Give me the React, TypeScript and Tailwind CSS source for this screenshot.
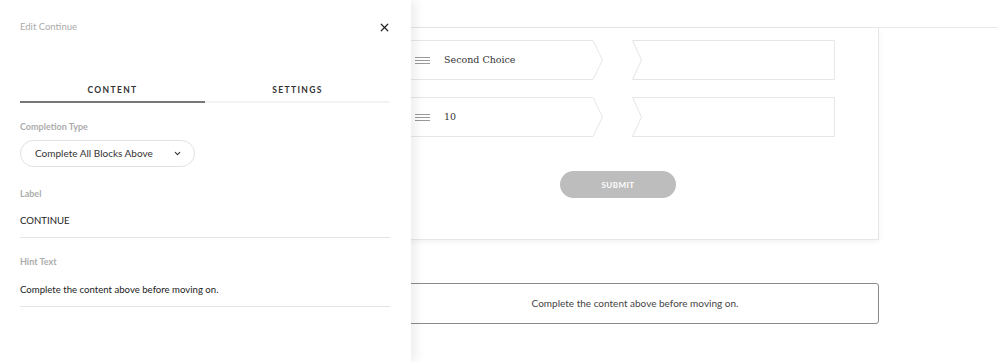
import { X, ChevronDown } from "lucide-react";

const sans = { fontFamily: "Lato, 'Noto Sans', sans-serif" };
const serif = { fontFamily: "'DejaVu Serif', 'Liberation Serif', serif" };

function DragHandle() {
    return (
        <div className="flex w-[15px] flex-col gap-[2px]">
            <span className="h-px w-full bg-[#9a9a9a]" />
            <span className="h-px w-full bg-[#9a9a9a]" />
            <span className="h-px w-full bg-[#9a9a9a]" />
        </div>
    );
}

function ChoiceRow({ label, h }: { label: string; h: number }) {
    return (
        <div className="flex items-center gap-[29px]">
            <div className="relative flex w-[201px] items-center pl-[13px]" style={{ height: h }}>
                <svg className="absolute inset-0" width="201" height={h} viewBox={`0 0 201 ${h}`}>
                    <polygon
                        points={`0.5,0.5 191,0.5 200.5,${h / 2} 191,${h - 0.5} 0.5,${h - 0.5}`}
                        fill="white"
                        stroke="#e6e6e6"
                    />
                </svg>
                <div className="relative flex items-center gap-[14px]">
                    <DragHandle />
                    <span className="text-[9.5px] text-[#333]" style={serif}>
                        {label}
                    </span>
                </div>
            </div>
            <svg width="203" height={h} viewBox={`0 0 203 ${h}`}>
                <polygon
                    points={`0.5,0.5 202.5,0.5 202.5,${h - 0.5} 0.5,${h - 0.5} 9.5,${h / 2}`}
                    fill="white"
                    stroke="#e6e6e6"
                />
            </svg>
        </div>
    );
}

function Field({ label, value, mt, gap }: { label: string; value: string; mt: string; gap: string }) {
    return (
        <div className={mt}>
            <div className="h-[12px] text-[9px] font-bold leading-[12px] text-[#acacac]">{label}</div>
            <div className={`${gap} h-[27px] border-b border-[#e4e4e4] text-[9.6px] leading-[20px] text-[#222]`}>
                {value}
            </div>
        </div>
    );
}

export default function App() {
    return (
        <div className="relative h-[362px] w-[998px] overflow-hidden bg-white" style={sans}>
            {/* page behind the drawer */}
            <div className="h-[28px] border-b border-[#e8e8e8]" />
            <div className="ml-[357px] flex h-[212px] w-[522px] flex-col items-start border-r border-b border-[#e6e6e6] bg-white pt-[12px] pl-[45px] shadow-[0_2px_6px_rgba(0,0,0,0.05)]">
                <ChoiceRow label="Second Choice" h={40} />
                <div className="h-[17px]" />
                <ChoiceRow label="10" h={40} />
                <button className="mt-[34px] ml-[158px] h-[27px] w-[116px] rounded-full bg-[#bdbdbd] text-[8px] font-bold tracking-[0.06em] text-white">
                    SUBMIT
                </button>
            </div>
            <div className="mt-[43px] ml-[391px] flex h-[41px] w-[488px] items-center justify-center rounded-[3px] border border-[#8a8a8a] text-[10px] text-[#444]">
                Complete the content above before moving on.
            </div>

            {/* edit drawer */}
            <div className="absolute top-0 left-0 h-full w-[411px] bg-white pr-[21px] pl-[20px] shadow-[5px_0_10px_rgba(0,0,0,0.07)]">
                <div className="flex h-[54px] items-center justify-between">
                    <span className="text-[9.5px] text-[#ababab]">Edit Continue</span>
                    <X size={13} strokeWidth={2.2} className="mr-[-1px] text-[#222]" />
                </div>
                <div className="mt-[24px] flex">
                    <div className="flex h-[25px] flex-1 items-center justify-center border-b-2 border-[#777] pt-[2px] text-[8.5px] font-bold tracking-[0.16em] text-[#333]">
                        CONTENT
                    </div>
                    <div className="flex h-[25px] flex-1 items-center justify-center border-b-2 border-[#f3f3f3] pt-[2px] text-[8.5px] font-bold tracking-[0.16em] text-[#333]">
                        SETTINGS
                    </div>
                </div>
                <div className="mt-[18px] h-[12px] text-[9px] font-bold leading-[12px] text-[#acacac]">
                    Completion Type
                </div>
                <div className="mt-[7px] flex h-[27px] w-[175px] items-center justify-between rounded-full border border-[#e2e2e2] pr-[12px] pl-[14px] text-[10px] text-[#333]">
                    <span>Complete All Blocks Above</span>
                    <ChevronDown size={9} strokeWidth={3} className="text-[#333]" />
                </div>
                <Field label="Label" value="CONTINUE" mt="mt-[21px]" gap="mt-[11px]" />
                <Field label="Hint Text" value="Complete the content above before moving on." mt="mt-[18px]" gap="mt-[12px]" />
            </div>
        </div>
    );
}
